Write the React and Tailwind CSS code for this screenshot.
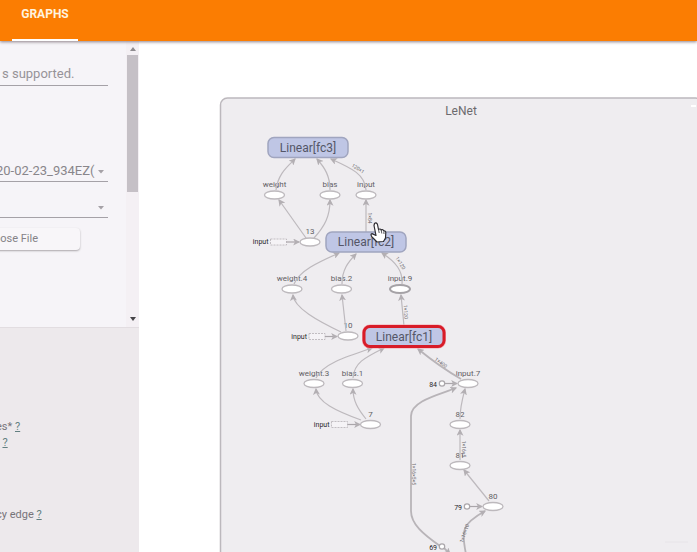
const modules = [
  { name: "Linear[fc3]", x: 308, y: 147.5 },
  { name: "Linear[fc2]", x: 366, y: 242 },
  { name: "Linear[fc1]", x: 404, y: 336.5, selected: true },
];

const nodes = [
  { label: "weight", x: 274.5, y: 195 },
  { label: "bias", x: 330, y: 195 },
  { label: "input", x: 366, y: 195 },
  { label: "13", x: 310, y: 242 },
  { label: "weight.4", x: 292, y: 289 },
  { label: "bias.2", x: 341.5, y: 289 },
  { label: "input.9", x: 400, y: 289, heavy: true },
  { label: "10", x: 348, y: 336 },
  { label: "weight.3", x: 314, y: 383.5 },
  { label: "bias.1", x: 352.5, y: 383.5 },
  { label: "input.7", x: 468, y: 383.5 },
  { label: "7", x: 370.5, y: 424.5 },
  { label: "82", x: 460, y: 424.5 },
  { label: "81", x: 460, y: 465.5 },
  { label: "80", x: 493, y: 506.5 },
];

const inputs = [
  { x: 278.5, y: 242, end: 299 },
  { x: 317, y: 336.5, end: 337 },
  { x: 339.5, y: 424.5, end: 360 },
];

const constants = [
  { label: "84", x: 442, y: 383.5, end: 457 },
  { label: "79", x: 467, y: 506.5, end: 482 },
  { label: "69", x: 442, y: 546.5 },
];

const edges = [
  "M276 190C278 174 287 167 295 159",
  "M330 190C330 176 325 168 317 159",
  "M366 190C365 174 351 168 331 159",
  "M306 238L279 200",
  "M314 238C325 226 330 216 330 200",
  "M366 232V200",
  "M294 284C300 270 319 262 339 253",
  "M342 284C342 270 348 262 356 254",
  "M402 284C403 271 396 262 382 253",
  "M341 332C318 321 294 308 293 295",
  "M346 331L342 295",
  "M404 326L401 295",
  "M316 378C323 364 345 357 372 348",
  "M353 378C354 363 364 358 384 348",
  "M361 420C336 411 317 402 316 389",
  "M366 419C358 409 353 401 353 389",
  "M460 419C460 407 462 400 465 389",
  "M460 460V430",
  "M489 501L464 470",
];

const heavyEdges = [
  "M461 379C447 371 434 362 418 349",
  "M440 546C423 534 411 524 411 511V416C411 401 438 395 456 388",
  "M443 547L450 554",
  "M466 554C461 530 462 524 485 511",
];

const shapes = [
  { text: "120×1", x: 357, y: 170, turn: 33 },
  { text: "1×84", x: 368, y: 218, turn: 90 },
  { text: "1×120", x: 399, y: 264, turn: 58 },
  { text: "1×120", x: 404, y: 312, turn: 87 },
  { text: "1×400", x: 440, y: 364, turn: 36 },
  { text: "1×16×5×5", x: 412, y: 474, turn: 90 },
  { text: "1×16×5", x: 462, y: 449, turn: 90 },
  { text: "1×16×10", x: 466, y: 534, turn: -70 },
];

function Graph() {
  return (
    <svg className="h-full w-full font-['Roboto',sans-serif]" role="img" aria-label="LeNet graph">
      <defs>
        <marker id="arrow" viewBox="0 0 6 6" refX="5" refY="3" markerWidth="7" markerHeight="7" markerUnits="userSpaceOnUse" orient="auto">
          <path d="M0 0L6 3L0 6L1.5 3Z" fill="#b3afb3" />
        </marker>
      </defs>
      <g transform="translate(-139 -41)">
        <rect x="220.5" y="98" width="482" height="700" rx="7" fill="#efedf0" stroke="#bcb8bd" strokeWidth="1.5" />
        <text x="461" y="115" textAnchor="middle" fontSize="12" fill="#6c6a6e">LeNet</text>
        <path d="M691 106H696" stroke="#fff" strokeWidth="2" />
        <path d="M665 542H688" stroke="#e7e4e8" />

        {nodes.map((n) => (
          <text key={n.label} x={n.x} y={n.y - 8} textAnchor="middle" fontSize="8" fill="#626064">{n.label}</text>
        ))}

        <g fill="none" stroke="#bdb9bd" strokeWidth="1.2">
          {edges.map((d) => (
            <path key={d} d={d} markerEnd="url(#arrow)" />
          ))}
        </g>
        <g fill="none" stroke="#b8b4b8" strokeWidth="1.8">
          {heavyEdges.map((d) => (
            <path key={d} d={d} markerEnd="url(#arrow)" />
          ))}
        </g>

        {shapes.map((s) => (
          <text key={`${s.x}-${s.y}`} transform={`translate(${s.x} ${s.y}) rotate(${s.turn})`} textAnchor="middle" fontSize="5" fill="#69666a">
            {s.text}
          </text>
        ))}

        {inputs.map((i) => (
          <g key={i.y}>
            <text x={i.x - 10} y={i.y + 2} textAnchor="end" fontSize="7" fill="#29272a">input</text>
            <rect x={i.x - 8} y={i.y - 3} width="16" height="6" fill="#f5f3f6" stroke="#b5b1b5" strokeDasharray="2 1" strokeWidth=".8" />
            <path d={`M${i.x + 8} ${i.y}H${i.end}`} stroke="#aaa6aa" strokeWidth="1.2" markerEnd="url(#arrow)" />
          </g>
        ))}

        {constants.map((c) => (
          <g key={c.label}>
            <text x={c.x - 5} y={c.y + 3} textAnchor="end" fontSize="7" fill="#29272a">{c.label}</text>
            {c.end && <path d={`M${c.x + 3} ${c.y}H${c.end}`} stroke="#aaa6aa" strokeWidth="1.2" markerEnd="url(#arrow)" />}
            <circle cx={c.x} cy={c.y} r="2.7" fill="#fff" stroke="#aaa6aa" strokeWidth="1.2" />
          </g>
        ))}

        {nodes.map((n) => (
          <ellipse
            key={n.label}
            cx={n.x}
            cy={n.y}
            rx="10"
            ry="4"
            fill="#fff"
            stroke={n.heavy ? "#a5a2a6" : "#bdb9bd"}
            strokeWidth={n.heavy ? 2 : 1.3}
          />
        ))}

        {modules.map((m) => (
          <g key={m.name}>
            {m.selected && (
              <rect x={m.x - 41} y={m.y - 11} width="82" height="22" rx="7" fill="none" stroke="#f3a5ae" strokeWidth="2" />
            )}
            <rect
              x={m.x - 40}
              y={m.y - 10}
              width="80"
              height="20"
              rx="6"
              fill="#bfc6e5"
              stroke={m.selected ? "#d81c28" : "#a0a5bf"}
              strokeWidth={m.selected ? 3 : 1.5}
            />
            <text x={m.x} y={m.y + 4} textAnchor="middle" fontSize="12" fill="#545667">{m.name}</text>
          </g>
        ))}

        {/* hand cursor over fc2 */}
        <path
          d="M374.5 223.5C376 222.3 377.3 223.2 377.6 225L378.5 229.5C379.5 228.6 380.8 229 381.2 230C382.3 229.2 383.6 230 383.8 231C385 230.6 385.7 231.4 385.8 232.5L385.5 238L383.5 241.5L377 242L373 238C370.5 235.5 370.5 234 372 233.6L376 235.5L374 225.5Z"
          fill="#fff"
          stroke="#2c2b30"
          strokeWidth="1.2"
          strokeLinejoin="round"
        />
        <path d="M378.5 229.5L379.2 233M381.2 230L381.8 233.5M383.8 231.5L384 234" stroke="#2c2b30" strokeWidth=".8" />
      </g>
    </svg>
  );
}

function Dropdown({ label, value }) {
  return (
    <div className="relative h-6 w-[108px] border-b border-[#a5a1a7]">
      <select aria-label={label} defaultValue={value} className="-ml-1 h-6 w-[100px] appearance-none overflow-hidden text-[13px] text-[#89868b] outline-none">
        <option>{value}</option>
      </select>
      <svg className="absolute top-3 right-1 h-1 w-1.5" viewBox="0 0 6 4">
        <path d="M0 0H6L3 3.5Z" fill="#a5a1a7" />
      </svg>
    </div>
  );
}

function HelpRow({ text }) {
  return (
    <p className="-ml-1 h-4 whitespace-nowrap text-[11px] leading-4">
      {text} <a href="#help" className="text-[#627f80] underline">?</a>
    </p>
  );
}

function Sidebar() {
  return (
    <aside className="flex w-[139px] shrink-0 flex-col bg-[#ede9ec] text-[#77747a]">
      <div className="flex h-[287px] shrink-0 border-b border-[#e2dde1] bg-[#f6f4f8]">
        <div className="min-w-0 flex-1 overflow-hidden pt-[21px]">
          <input
            aria-label="Search nodes"
            placeholder="s supported."
            className="block h-6 w-[108px] border-b border-[#a5a1a7] pl-0.5 text-[13px] outline-none placeholder:text-[#969398]"
          />
          <div className="mt-[72px] flex flex-col gap-3">
            <Dropdown label="Run" value="20-02-23_934EZ(" />
            <Dropdown label="Tag" value="" />
          </div>
          <button className="mt-2.5 -ml-2 h-[22px] w-[88px] rounded-sm bg-[#f8f6f9] pl-0.5 text-left text-[11px] text-[#858287] shadow-[0_1px_2px_#aaa6aa]">
            oose File
          </button>
        </div>
        <div className="flex w-[13px] flex-col items-center bg-[#f4f0f4]">
          <svg className="mt-1.5 h-1 w-1.5" viewBox="0 0 6 4">
            <path d="M0 4L3 0L6 4Z" fill="#8e8b8f" />
          </svg>
          <div className="mt-1 h-[137px] w-[11px] bg-[#c5c0c6]" />
          <svg className="mt-auto mb-1.5 h-1 w-1.5" viewBox="0 0 6 4">
            <path d="M0 0H6L3 4Z" fill="#454347" />
          </svg>
        </div>
      </div>
      <div className="overflow-hidden pt-[91px]">
        <HelpRow text="es*" />
        <HelpRow text="r" />
        <div className="mt-14">
          <HelpRow text="cy edge" />
        </div>
      </div>
    </aside>
  );
}

export default function App() {
  return (
    <div className="flex h-screen flex-col overflow-hidden bg-white font-['Roboto',sans-serif]">
      <header className="z-10 flex h-[41px] shrink-0 bg-[#fb7d02] pl-3 shadow-[0_1px_3px_#8e8088]">
        <button className="w-[66px] border-b-2 border-white pb-3 text-xs font-bold text-[#fff3df]">GRAPHS</button>
      </header>
      <div className="flex min-h-0 flex-1">
        <Sidebar />
        <main className="min-w-0 flex-1">
          <Graph />
        </main>
      </div>
    </div>
  );
}
